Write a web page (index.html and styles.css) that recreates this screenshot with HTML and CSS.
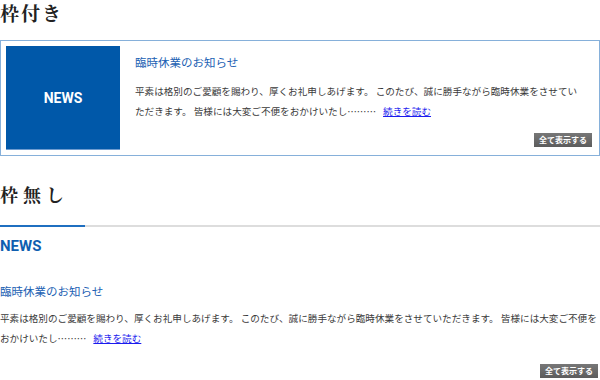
FILE: index.html
```html
<!DOCTYPE html>
<html lang="ja">
<head>
    <meta charset="UTF-8">
    <title>お知らせ</title>
    <link rel="stylesheet" href="styles.css">
</head>
<body>
    <h2 class="sample-title">枠付き</h2>
    <div class="news-box">
        <div class="news-label">NEWS</div>
        <div class="news-body">
            <h3 class="news-title">臨時休業のお知らせ</h3>
            <p class="news-text">平素は格別のご愛顧を賜わり、厚くお礼申しあげます。 このたび、誠に勝手ながら臨時休業をさせていただきます。 皆様には大変ご不便をおかけいたし………<a href="#">続きを読む</a></p>
            <div class="news-more"><a class="more-btn" href="#">全て表示する</a></div>
        </div>
    </div>

    <h2 class="sample-title wide">枠無し</h2>
    <div class="news-plain">
        <div class="plain-head">NEWS</div>
        <h3 class="news-title">臨時休業のお知らせ</h3>
        <p class="news-text">平素は格別のご愛顧を賜わり、厚くお礼申しあげます。 このたび、誠に勝手ながら臨時休業をさせていただきます。 皆様には大変ご不便をおかけいたし………<a href="#">続きを読む</a></p>
        <div class="news-more"><a class="more-btn" href="#">全て表示する</a></div>
    </div>
</body>
</html>
```
FILE: styles.css
```css
* {
    box-sizing: border-box;
}

body {
    margin: 0;
    width: 600px;
    font-family: 'Noto Sans CJK JP', sans-serif;
    color: #333;
    background-color: #fff;
}

.sample-title {
    margin: 0;
    height: 40px;
    font-family: 'Noto Serif CJK JP', 'Liberation Serif', serif;
    font-size: 19px;
    font-weight: bold;
    line-height: 26px;
    letter-spacing: 2px;
    color: #222;
}

.sample-title.wide {
    height: auto;
    margin-top: 25px;
    font-size: 18px;
    letter-spacing: 5px;
}

.news-box {
    display: flex;
    width: 600px;
    height: 116px;
    padding: 5px;
    border: 1px solid #86b0da;
}

.news-label {
    display: flex;
    align-items: center;
    justify-content: center;
    flex: 0 0 114px;
    height: 104px;
    background-color: #0058a9;
    border-bottom: 1px solid #6d9bd0;
    color: #fff;
    font-family: Roboto, 'Liberation Sans', sans-serif;
    font-size: 14px;
    font-weight: bold;
}

.news-body {
    flex: 1;
    display: flex;
    flex-direction: column;
    padding: 9px 8px 0 15px;
}

.news-title {
    margin: 0;
    font-size: 11.5px;
    font-weight: normal;
    line-height: 14px;
    color: #1b61b3;
}

.news-text {
    margin: 12px 0 0;
    font-size: 9.6px;
    line-height: 20px;
    color: #3a3a3a;
}

.news-text a {
    display: inline-block;
    margin-left: 7px;
    color: #1a1aee;
}

.news-more {
    display: flex;
    justify-content: flex-end;
    margin-top: auto;
    margin-right: -6px;
    padding-bottom: 3px;
}

.more-btn {
    display: block;
    padding: 0 5px;
    height: 14px;
    line-height: 14px;
    background: linear-gradient(#777, #5c5c5c);
    color: #fff;
    font-size: 8px;
    font-weight: bold;
    text-decoration: none;
}

.plain-head {
    position: relative;
    margin-top: 18px;
    padding-top: 9px;
    border-top: 2px solid #ddd;
    color: #0f5fb0;
    font-family: Roboto, 'Liberation Sans', sans-serif;
    font-size: 15px;
    font-weight: bold;
    line-height: 20px;
}

.plain-head::before {
    content: "";
    position: absolute;
    top: -2px;
    left: 0;
    width: 85px;
    height: 2px;
    background-color: #1f6fc0;
}

.news-plain .news-title {
    margin-top: 28px;
}

.news-plain .news-text {
    margin-top: 10px;
}

.news-plain .news-more {
    margin-top: 16px;
    margin-right: 0;
    padding-right: 2px;
}
```
